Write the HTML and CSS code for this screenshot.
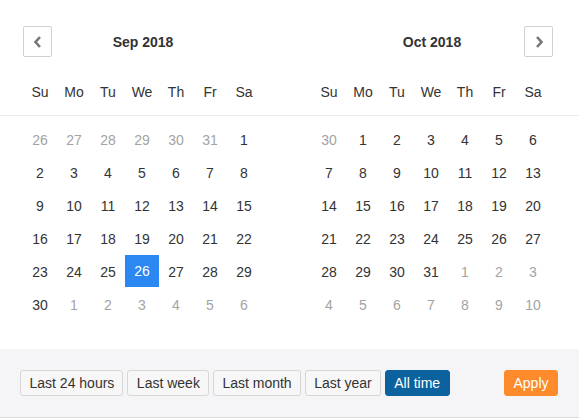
FILE: index.html
```html
<!DOCTYPE html>
<html>
<head>
<meta charset="utf-8">
<link rel="stylesheet" href="styles.css">
</head>
<body>
<div class="picker">
  <div class="heads">
    <div class="month-head">
      <div class="title-row">
        <button class="nav"><svg width="10" height="14" viewBox="0 0 10 14"><polyline points="7,2 2.5,7 7,12" fill="none" stroke="#777" stroke-width="2.6"/></svg></button>
        <div class="title">Sep 2018</div>
        <div class="spacer"></div>
      </div>
      <div class="weekdays"><span>Su</span><span>Mo</span><span>Tu</span><span>We</span><span>Th</span><span>Fr</span><span>Sa</span></div>
    </div>
    <div class="month-head">
      <div class="title-row">
        <div class="spacer"></div>
        <div class="title">Oct 2018</div>
        <button class="nav next"><svg width="10" height="14" viewBox="0 0 10 14"><polyline points="3,2 7.5,7 3,12" fill="none" stroke="#777" stroke-width="2.6"/></svg></button>
      </div>
      <div class="weekdays"><span>Su</span><span>Mo</span><span>Tu</span><span>We</span><span>Th</span><span>Fr</span><span>Sa</span></div>
    </div>
  </div>
  <div class="bodies">
    <div class="days">
      <span class="out">26</span><span class="out">27</span><span class="out">28</span><span class="out">29</span><span class="out">30</span><span class="out">31</span><span>1</span>
      <span>2</span><span>3</span><span>4</span><span>5</span><span>6</span><span>7</span><span>8</span>
      <span>9</span><span>10</span><span>11</span><span>12</span><span>13</span><span>14</span><span>15</span>
      <span>16</span><span>17</span><span>18</span><span>19</span><span>20</span><span>21</span><span>22</span>
      <span>23</span><span>24</span><span>25</span><span class="sel">26</span><span>27</span><span>28</span><span>29</span>
      <span>30</span><span class="out">1</span><span class="out">2</span><span class="out">3</span><span class="out">4</span><span class="out">5</span><span class="out">6</span>
    </div>
    <div class="days">
      <span class="out">30</span><span>1</span><span>2</span><span>3</span><span>4</span><span>5</span><span>6</span>
      <span>7</span><span>8</span><span>9</span><span>10</span><span>11</span><span>12</span><span>13</span>
      <span>14</span><span>15</span><span>16</span><span>17</span><span>18</span><span>19</span><span>20</span>
      <span>21</span><span>22</span><span>23</span><span>24</span><span>25</span><span>26</span><span>27</span>
      <span>28</span><span>29</span><span>30</span><span>31</span><span class="out">1</span><span class="out">2</span><span class="out">3</span>
      <span class="out">4</span><span class="out">5</span><span class="out">6</span><span class="out">7</span><span class="out">8</span><span class="out">9</span><span class="out">10</span>
    </div>
  </div>
  <div class="footer">
    <div class="ranges">
      <button class="btn">Last 24 hours</button>
      <button class="btn">Last week</button>
      <button class="btn">Last month</button>
      <button class="btn">Last year</button>
      <button class="btn active">All time</button>
    </div>
    <button class="btn apply">Apply</button>
  </div>
</div>
</body>
</html>
```
FILE: styles.css
```css
* { box-sizing: border-box; }
html, body { margin: 0; padding: 0; background: #fff; }
body {
  font-family: "Liberation Sans", Arial, sans-serif;
  font-size: 14px;
  color: #333;
  width: 579px;
}
.heads {
  display: flex;
  justify-content: space-between;
  padding: 26px 29px 7px 23px;
  border-bottom: 1px solid #ebebeb;
}
.month-head { width: 238px; }
.title-row {
  display: grid;
  grid-template-columns: 29px 1fr 29px;
  align-items: center;
  height: 32px;
}
.title {
  text-align: center;
  font-weight: bold;
  font-size: 14px;
  color: #333;
  padding-left: 2px;
}
.nav {
  width: 29px;
  height: 31px;
  padding: 0;
  margin: 0;
  border: 1px solid #d0d0d0;
  border-radius: 2px;
  background: #fff;
  display: flex;
  align-items: center;
  justify-content: center;
  align-self: start;
}
.nav.next { margin-left: 3px; }
.weekdays {
  display: grid;
  grid-template-columns: repeat(7, 34px);
  height: 33px;
  margin-top: 17px;
  align-items: center;
  text-align: center;
}
.bodies {
  display: flex;
  justify-content: space-between;
  padding: 7px 29px 28px 23px;
}
.days {
  display: grid;
  grid-template-columns: repeat(7, 34px);
  grid-auto-rows: 33px;
}
.days span {
  display: flex;
  align-items: center;
  justify-content: center;
  color: #333;
}
.days span.out { color: #a3a3a3; }
.days span.sel {
  background: #2b88f2;
  color: #fff;
  margin: 0 0 1px 0;
}
.footer {
  height: 69px;
  background: #f5f5f7;
  border-bottom: 1px solid #dcdcdc;
  display: flex;
  align-items: center;
  padding: 0 21px 0 20px;
}
.ranges { display: flex; gap: 4px; }
.btn {
  font-family: "Liberation Sans", Arial, sans-serif;
  font-size: 14px;
  color: #333;
  height: 26px;
  padding: 0 8px 0 8.5px;
  margin: 0;
  border: 1px solid #d6d6d6;
  border-radius: 3px;
  background: #f7f7f7;
  line-height: 25px;
}
.btn.active {
  background: #0b629e;
  border-color: #0b629e;
  color: #fff;
  padding: 0 8.5px;
}
.btn.apply {
  margin-left: auto;
  background: #fd8a2b;
  border-color: #fd8a2b;
  color: #fff;
  width: 54px;
  padding: 0;
}
```
